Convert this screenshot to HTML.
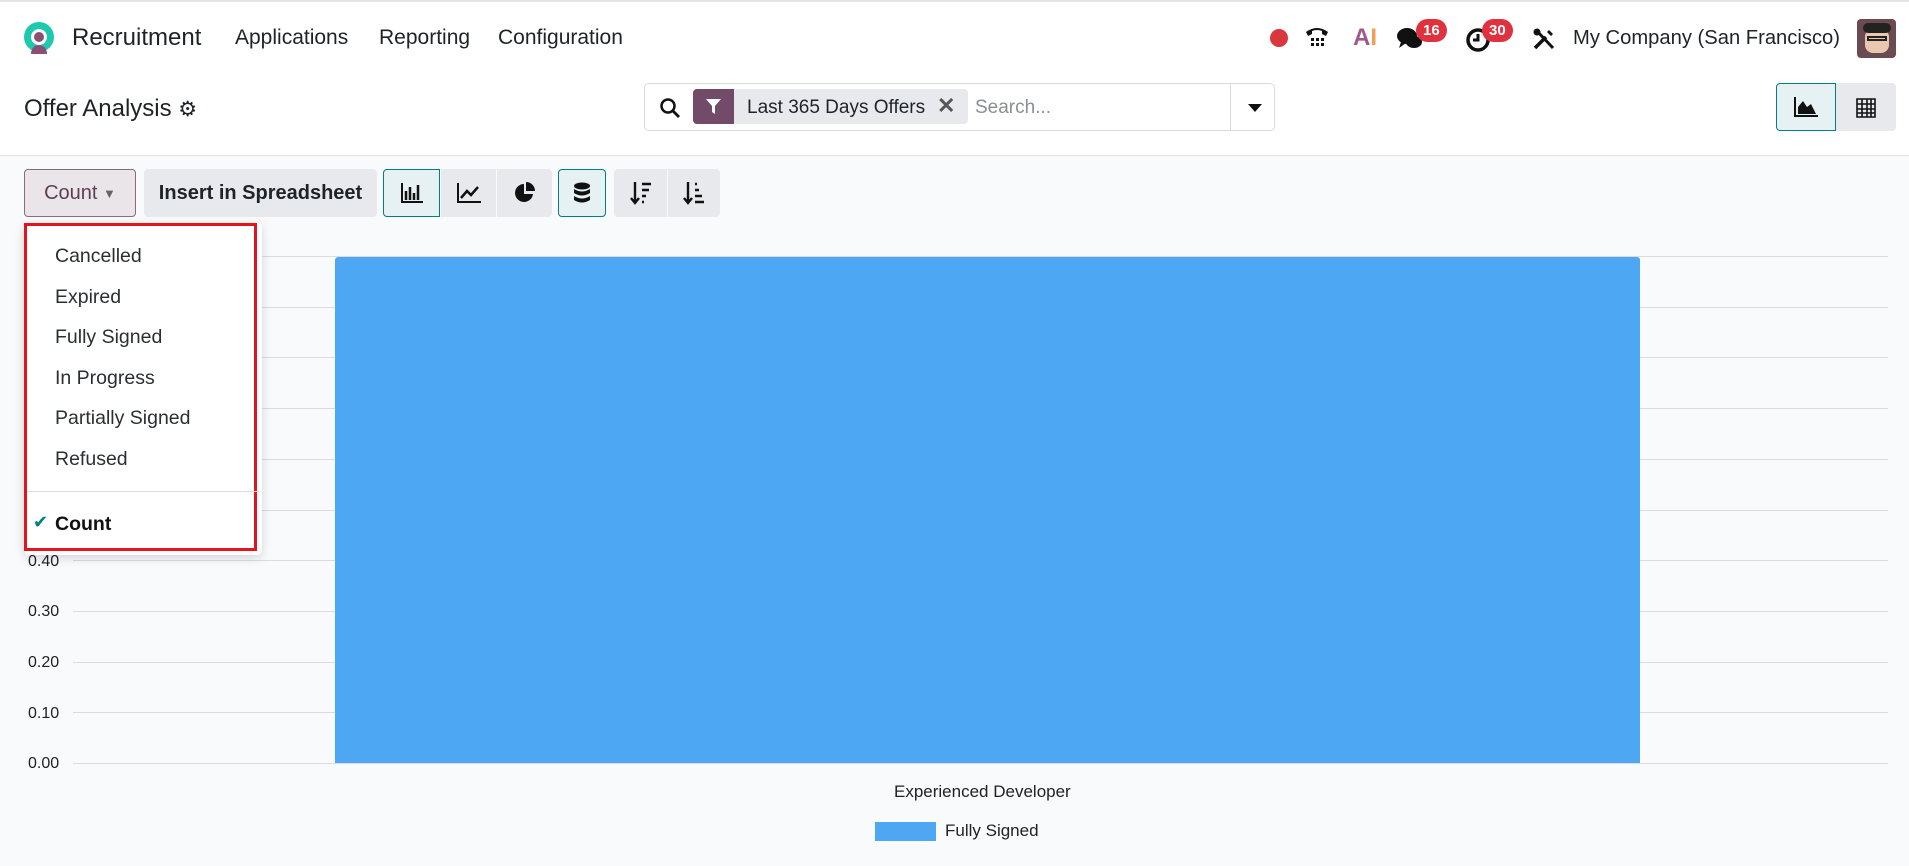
<!DOCTYPE html>
<html><head><meta charset="utf-8"><style>
*{box-sizing:border-box;margin:0;padding:0}
body{width:1909px;height:866px;overflow:hidden;background:#f9fafb;font-family:"Liberation Sans",sans-serif;color:#1f2328;position:relative}
.abs{position:absolute}
.nav{left:0;top:0;width:1909px;height:73px;background:#fff;border-top:2px solid #e5e5e5}
.navt{font-size:21px;top:24px;color:#1f2328}
.cp{left:0;top:73px;width:1909px;height:83px;background:#fff;border-bottom:1px solid #dee2e6}
.btn{background:#e7e9ed;border-radius:4px;height:48px;top:169px;display:flex;align-items:center;justify-content:center}
.badge{background:#e0323e;color:#fff;font-size:15px;border-radius:12px;padding:3px 7px;font-weight:bold}
.grid{left:73px;width:1815px;height:1px;background:#dcdcdc}
.yl{left:28px;font-size:16px;color:#222}
.item{left:55px;font-size:19.5px;color:#2b2f33}
</style></head><body>
<div class="abs nav">
  <svg class="abs" style="left:22px;top:18px" width="34" height="36" viewBox="0 0 34 36"><circle cx="17" cy="17" r="15" fill="#1ec9b0"/><circle cx="17" cy="17" r="8" fill="#fff"/><path d="M9 34 C9 22 25 22 25 34Z" fill="#8a4f75"/><circle cx="17" cy="17" r="5" fill="#8a4f75"/></svg>
  <div class="abs navt" style="left:72px;font-size:24px;top:22px">Recruitment</div>
  <div class="abs navt" style="left:235px">Applications</div>
  <div class="abs navt" style="left:379px">Reporting</div>
  <div class="abs navt" style="left:498px">Configuration</div>
  <div class="abs" style="left:1270px;top:27px;width:18px;height:18px;border-radius:50%;background:#d9363e"></div>
  <svg class="abs" style="left:1304px;top:22px" width="26" height="26" viewBox="0 0 26 26"><path d="M2 8 Q13 0 24 8 L22 12 L18 10 L18 7 Q13 5 8 7 L8 10 L4 12Z" fill="#111"/><g fill="#111"><rect x="7" y="14" width="3" height="3"/><rect x="12" y="14" width="3" height="3"/><rect x="17" y="14" width="3" height="3"/><rect x="7" y="19" width="3" height="3"/><rect x="12" y="19" width="3" height="3"/><rect x="17" y="19" width="3" height="3"/></g></svg>
  <div class="abs" style="left:1353px;top:22px;font-size:24px;font-weight:bold;color:#a05a8a">A<span style="color:#f0a050">I</span></div>
  <svg class="abs" style="left:1396px;top:24px" width="28" height="26" viewBox="0 0 28 26"><ellipse cx="11" cy="10" rx="10" ry="8" fill="#111"/><path d="M5 16 L3 22 L10 17Z" fill="#111"/><ellipse cx="18" cy="16" rx="8" ry="6" fill="#111"/></svg>
  <div class="abs badge" style="left:1416px;top:17px">16</div>
  <svg class="abs" style="left:1465px;top:25px" width="26" height="26" viewBox="0 0 26 26"><circle cx="13" cy="13" r="10" fill="none" stroke="#111" stroke-width="3.5"/><path d="M13 7 V13 H8" stroke="#111" stroke-width="3" fill="none"/></svg>
  <div class="abs badge" style="left:1482px;top:17px">30</div>
  <svg class="abs" style="left:1532px;top:25px" width="24" height="24" viewBox="0 0 24 24"><path d="M3 21 L14 10" stroke="#111" stroke-width="3.5"/><path d="M17 3 L21 7 L19 9 L15 5Z" fill="#111"/><path d="M4 3 L21 21" stroke="#111" stroke-width="3"/><circle cx="5" cy="5" r="3.5" fill="#111"/></svg>
  <div class="abs navt" style="left:1573px;font-size:20.2px;top:25px">My Company (San Francisco)</div>
  <div class="abs" style="left:1857px;top:17px;width:39px;height:39px;border-radius:4px;background:#6b4a52"><div class="abs" style="left:8px;top:10px;width:24px;height:24px;border-radius:8px;background:#e9c7b0"></div><div class="abs" style="left:6px;top:4px;width:28px;height:10px;background:#222;border-radius:5px"></div><div class="abs" style="left:10px;top:17px;width:20px;height:5px;border:2px solid #222"></div></div>
</div>
<div class="abs cp">
  <div class="abs" style="left:24px;top:22px;font-size:24px">Offer Analysis <span style="font-size:21px">⚙</span></div>
  <div class="abs" style="left:644px;top:10px;width:631px;height:48px;background:#fff;border:1px solid #d8dadd;border-radius:5px">
    <svg class="abs" style="left:14px;top:13px" width="22" height="22" viewBox="0 0 22 22"><circle cx="9" cy="9" r="6.5" fill="none" stroke="#111" stroke-width="2.5"/><path d="M14 14 L20 20" stroke="#111" stroke-width="2.8"/></svg>
    <div class="abs" style="left:48px;top:5px;width:275px;height:35px;background:#e7e9ed;border-radius:4px;overflow:hidden">
      <div class="abs" style="left:0;top:0;width:41px;height:35px;background:#714b67"><svg class="abs" style="left:12px;top:9px" width="17" height="17" viewBox="0 0 17 17"><path d="M1 1 H16 L10 8 V16 L7 14 V8Z" fill="#fff"/></svg></div>
      <div class="abs" style="left:54px;top:8px;font-size:19px">Last 365 Days Offers</div>
      <div class="abs" style="left:244px;top:4px;font-size:22px;color:#555;font-weight:bold">✕</div>
    </div>
    <div class="abs" style="left:330px;top:13px;font-size:19px;color:#8a8f94">Search...</div>
    <div class="abs" style="left:585px;top:0;width:1px;height:46px;background:#d8dadd"></div>
    <div class="abs" style="left:603px;top:20px;width:0;height:0;border-left:7px solid transparent;border-right:7px solid transparent;border-top:8px solid #111"></div>
  </div>
  <div class="abs" style="left:1776px;top:10px;width:60px;height:48px;background:#e6f1f4;border:1px solid #017e84;border-radius:4px 0 0 4px"><svg class="abs" style="left:17px;top:13px" width="24" height="20" viewBox="0 0 24 20"><path d="M1 0 V19 H24" stroke="#111" stroke-width="2" fill="none"/><path d="M4 17 L4 10 L9 4 L13 10 L17 7 L22 17Z" fill="#111"/></svg></div>
  <div class="abs" style="left:1836px;top:10px;width:60px;height:48px;background:#e7e9ed;border-radius:0 4px 4px 0"><svg class="abs" style="left:20px;top:13px" width="20" height="22" viewBox="0 0 20 22"><path d="M1 3 H19 V21 H1Z M1 8 H19 M1 13 H19 M1 17 H19 M6 3 V21 M11 3 V21 M15 3 V21" stroke="#111" stroke-width="1.6" fill="none"/></svg></div>
</div>
<!-- toolbar -->
<div class="abs btn" style="left:24px;width:112px;background:#e9e5e8;border:1px solid #8a6a82;font-size:20px;color:#5c3f55">Count&nbsp;<span style="font-size:13px;color:#666">▼</span></div>
<div class="abs btn" style="left:144px;width:233px;font-size:20px;font-weight:bold;color:#1f2328">Insert in Spreadsheet</div>
<div class="abs btn" style="left:383px;width:57px;background:#e6f1f4;border:1px solid #017e84;border-radius:4px 0 0 4px"><svg width="22" height="20" viewBox="0 0 22 20"><path d="M1 0 V19 H22" stroke="#111" stroke-width="2" fill="none"/><path d="M5 8 V17 M9 4 V17 M13 10 V17 M17 2 V17" stroke="#111" stroke-width="2.5"/></svg></div>
<div class="abs btn" style="left:441px;width:55px;border-radius:0"><svg width="24" height="20" viewBox="0 0 24 20"><path d="M1 0 V19 H24" stroke="#111" stroke-width="2" fill="none"/><path d="M4 15 L10 8 L14 12 L21 4" stroke="#111" stroke-width="2.5" fill="none"/></svg></div>
<div class="abs btn" style="left:497px;width:55px;border-radius:0 4px 4px 0"><svg width="22" height="22" viewBox="0 0 22 22"><path d="M10 2 A9 9 0 1 0 19 12 H10Z" fill="#111"/><path d="M12 0 A9 9 0 0 1 21 9 H12Z" fill="#111"/></svg></div>
<div class="abs btn" style="left:558px;width:48px;background:#e6f1f4;border:1px solid #017e84"><svg width="18" height="22" viewBox="0 0 18 22"><ellipse cx="9" cy="4" rx="8" ry="3.5" fill="#111"/><path d="M1 7 Q9 12 17 7 V11 Q9 16 1 11Z M1 14 Q9 19 17 14 V18 Q9 23 1 18Z" fill="#111"/></svg></div>
<div class="abs btn" style="left:614px;width:53px;border-radius:4px 0 0 4px"><svg width="22" height="24" viewBox="0 0 22 24"><path d="M5 1 V21 M1 17 L5 22 L9 17" stroke="#111" stroke-width="2.4" fill="none"/><path d="M12 3 H21 M12 9 H19 M12 15 H16 M12 21 H14" stroke="#111" stroke-width="2.6"/></svg></div>
<div class="abs btn" style="left:668px;width:52px;border-radius:0 4px 4px 0"><svg width="22" height="24" viewBox="0 0 22 24"><path d="M5 1 V21 M1 17 L5 22 L9 17" stroke="#111" stroke-width="2.4" fill="none"/><path d="M12 3 H14 M12 9 H16 M12 15 H19 M12 21 H21" stroke="#111" stroke-width="2.6"/></svg></div>
<!-- chart -->
<div class="abs grid" style="top:256px"></div>
<div class="abs grid" style="top:307px"></div>
<div class="abs grid" style="top:357px"></div>
<div class="abs grid" style="top:408px"></div>
<div class="abs grid" style="top:459px"></div>
<div class="abs grid" style="top:510px"></div>
<div class="abs grid" style="top:560px"></div>
<div class="abs grid" style="top:611px"></div>
<div class="abs grid" style="top:662px"></div>
<div class="abs grid" style="top:712px"></div>
<div class="abs grid" style="top:763px"></div>
<div class="abs yl" style="top:553px">0.40</div>
<div class="abs yl" style="top:603px">0.30</div>
<div class="abs yl" style="top:654px">0.20</div>
<div class="abs yl" style="top:705px">0.10</div>
<div class="abs yl" style="top:755px">0.00</div>
<div class="abs" style="left:335px;top:257px;width:1305px;height:506px;background:#4ea7f2;border-radius:3px 3px 0 0"></div>
<div class="abs" style="left:894px;top:782px;font-size:17px;color:#222">Experienced Developer</div>
<div class="abs" style="left:875px;top:822px;width:61px;height:19px;background:#4ea7f2"></div>
<div class="abs" style="left:945px;top:821px;font-size:17px;color:#222">Fully Signed</div>
<!-- dropdown -->
<div class="abs" style="left:24px;top:223px;width:238px;height:332px;background:#fff;border-radius:5px;box-shadow:0 3px 10px rgba(0,0,0,.15)"></div>
<div class="abs" style="left:24px;top:223px;width:233px;height:328px;border:3px solid #e2151f"></div>
<div class="abs item" style="top:245px">Cancelled</div>
<div class="abs item" style="top:286px">Expired</div>
<div class="abs item" style="top:326px">Fully Signed</div>
<div class="abs item" style="top:367px">In Progress</div>
<div class="abs item" style="top:407px">Partially Signed</div>
<div class="abs item" style="top:448px">Refused</div>
<div class="abs" style="left:27px;top:491px;width:232px;height:1px;background:#dcdcdc"></div>
<div class="abs" style="left:33px;top:512px;font-size:18px;color:#017e84">✔</div>
<div class="abs item" style="top:513px;font-weight:bold;color:#111">Count</div>
</body></html>
